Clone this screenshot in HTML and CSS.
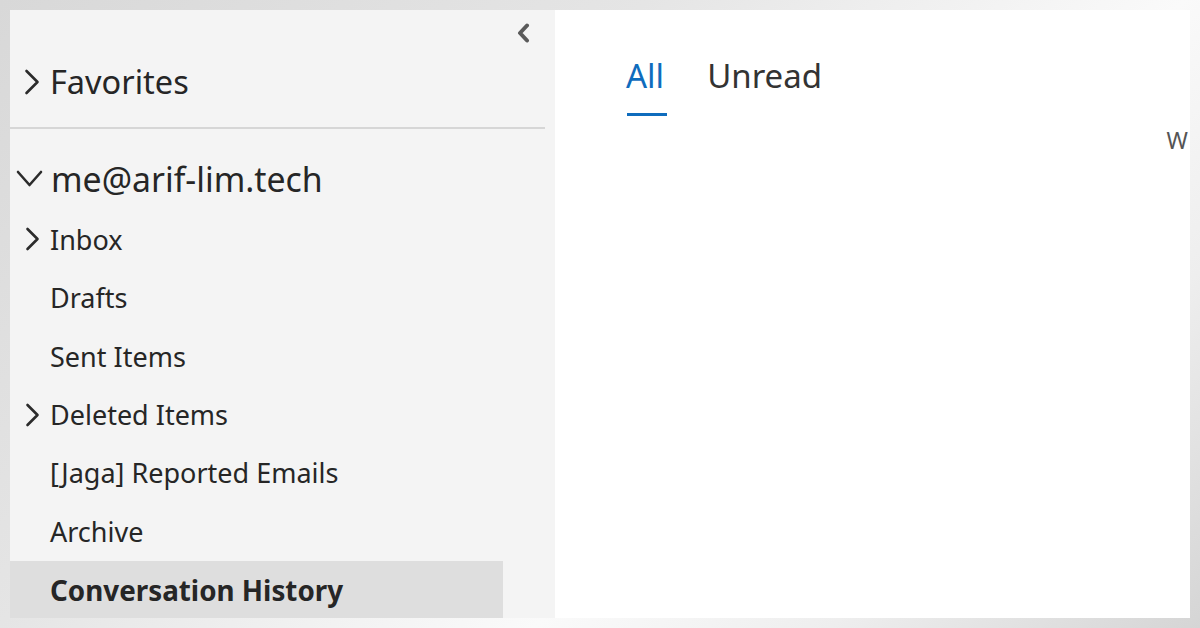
FILE: index.html
```html
<!DOCTYPE html>
<html lang="en">
<head>
<meta charset="utf-8">
<title>Mail</title>
<link rel="stylesheet" href="styles.css">
</head>
<body>
<div class="frame">
  <div class="app">
    <nav class="sidebar">
      <div class="toolbar">
        <button class="collapse" aria-label="Collapse">
          <svg width="14" height="20" viewBox="0 0 14 20"><path d="M11 2.5 L4 10 L11 17.5" fill="none" stroke="#5a5a5a" stroke-width="4" stroke-linecap="round" stroke-linejoin="round"/></svg>
        </button>
      </div>
      <div class="row row-lg fav">
        <span class="slot slot-fav"><svg width="16" height="26" viewBox="0 0 16 26"><path d="M2.5 2 L13.5 13 L2.5 24" fill="none" stroke="#2b2b2b" stroke-width="2.6" stroke-linecap="round" stroke-linejoin="round"/></svg></span>
        <span class="label">Favorites</span>
      </div>
      <div class="divider"></div>
      <div class="row row-lg account">
        <span class="slot slot-acc"><svg width="27" height="19" viewBox="0 0 27 19"><path d="M2 3 L13.5 16 L25 3" fill="none" stroke="#2b2b2b" stroke-width="2.6" stroke-linecap="round" stroke-linejoin="round"/></svg></span>
        <span class="label">me@arif-lim.tech</span>
      </div>
      <ul class="folders">
        <li class="row folder"><span class="slot slot-item"><svg width="15" height="24" viewBox="0 0 15 24"><path d="M2.5 2 L12.5 12 L2.5 22" fill="none" stroke="#2b2b2b" stroke-width="2.6" stroke-linecap="round" stroke-linejoin="round"/></svg></span><span class="label">Inbox</span></li>
        <li class="row folder"><span class="slot"></span><span class="label">Drafts</span></li>
        <li class="row folder"><span class="slot"></span><span class="label">Sent Items</span></li>
        <li class="row folder"><span class="slot slot-item"><svg width="15" height="24" viewBox="0 0 15 24"><path d="M2.5 2 L12.5 12 L2.5 22" fill="none" stroke="#2b2b2b" stroke-width="2.6" stroke-linecap="round" stroke-linejoin="round"/></svg></span><span class="label">Deleted Items</span></li>
        <li class="row folder"><span class="slot"></span><span class="label">[Jaga] Reported Emails</span></li>
        <li class="row folder"><span class="slot"></span><span class="label">Archive</span></li>
        <li class="row folder selected"><span class="slot"></span><span class="label">Conversation History</span></li>
      </ul>
    </nav>
    <main class="content">
      <div class="tabs">
        <span class="tab active">All</span>
        <span class="tab">Unread</span>
      </div>
      <div class="sortbar"><span class="sort">W</span></div>
    </main>
  </div>
</div>
</body>
</html>
```

FILE: styles.css
```css
* { box-sizing: border-box; }
html, body { margin: 0; padding: 0; }
body {
  width: 1200px;
  height: 628px;
  overflow: hidden;
  font-family: "Noto Sans", "Open Sans", sans-serif;
  color: #262626;
  background: linear-gradient(136deg, #d8d8d8 0%, #e5e5e5 35%, #fafafa 64%, #eeeeee 80%, #d5d5d5 100%);
}
.frame {
  padding: 10px;
  height: 628px;
}
.app {
  display: flex;
  height: 608px;
  overflow: hidden;
}
.sidebar {
  width: 545px;
  flex: none;
  background: #f4f4f4;
  display: flex;
  flex-direction: column;
}
.toolbar {
  height: 46px;
  display: flex;
  justify-content: flex-end;
  align-items: center;
  padding-right: 24px;
}
.collapse {
  border: 0;
  background: none;
  padding: 0;
  width: 16px;
  height: 22px;
  display: flex;
  align-items: center;
  justify-content: center;
}
.row {
  display: flex;
  align-items: center;
}
.slot {
  width: 40px;
  flex: none;
  display: flex;
  align-items: center;
}
.row-lg {
  height: 54px;
  font-size: 32.5px;
}
.slot-fav { padding-left: 14px; }
.slot-acc { width: 41px; padding-left: 6px; }
.slot-item { padding-left: 15px; }
.divider {
  height: 2px;
  background: #d6d6d6;
  margin: 19px 10px 0 0;
}
.account {
  margin-top: 23px;
  height: 54px;
  font-size: 33.8px;
}
.folders {
  list-style: none;
  margin: 5px 0 0 0;
  padding: 0;
}
.folder {
  height: 58.4px;
  font-size: 27px;
  width: 493px;
}
.folder.selected {
  background: #dedede;
  font-weight: 700;
  height: 57px;
  margin-top: 0.5px;
  font-size: 27.8px;
}
.content {
  flex: 1;
  background: #ffffff;
  display: flex;
  flex-direction: column;
}
.tabs {
  display: flex;
  gap: 43px;
  padding: 44px 0 0 71px;
}
.tab {
  font-size: 33px;
  line-height: 44px;
  padding-bottom: 18px;
  color: #333333;
  position: relative;
}
.tab.active {
  color: #0f6cbd;
}
.tab.active::after {
  content: "";
  position: absolute;
  left: 1px;
  right: -3px;
  bottom: 0;
  height: 3px;
  background: #0f6cbd;
}
.sortbar {
  display: flex;
  justify-content: flex-end;
  padding-top: 9px;
}
.sort {
  font-size: 23px;
  color: #555555;
  line-height: 30px;
  margin-right: 2px;
}
```
